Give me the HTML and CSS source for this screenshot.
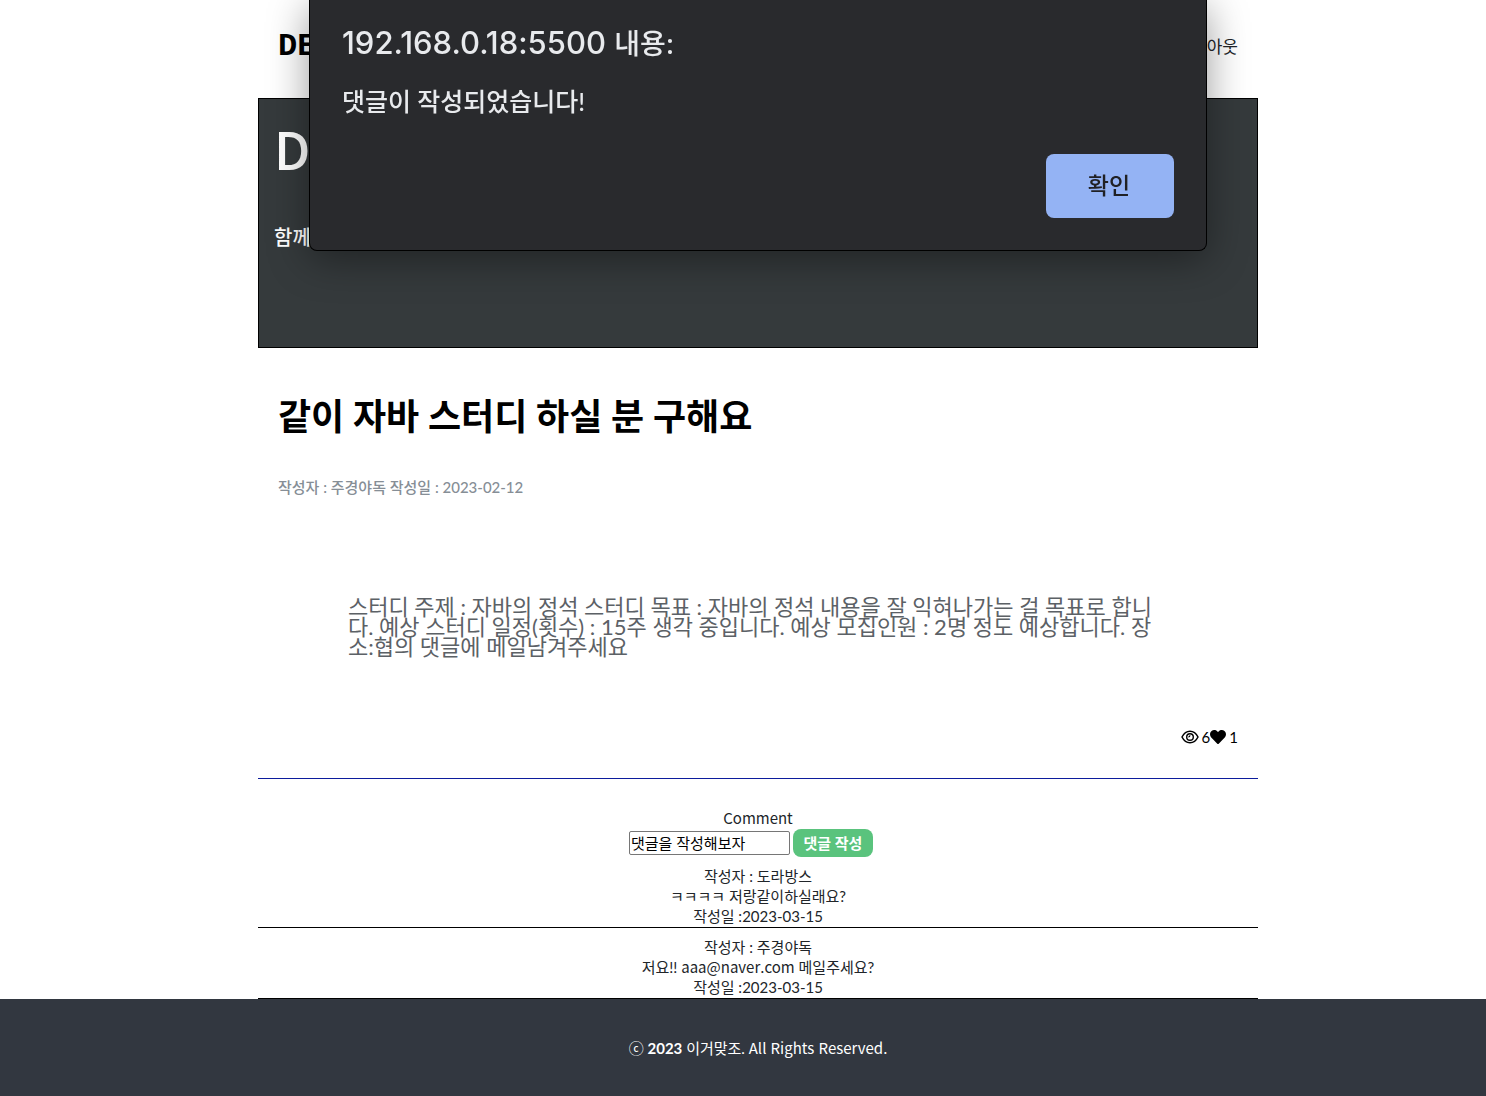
FILE: index.html
```html
<!DOCTYPE html>
<html lang="ko">
<head>
<meta charset="utf-8">
<meta name="viewport" content="width=device-width, initial-scale=1">
<title>스터디 모집</title>
<link rel="stylesheet" href="styles.css">
</head>
<body>
<div class="page">
  <header class="header container">
    <a class="logo" href="#">DE</a>
    <nav><a class="nav-link" href="#">로그아웃</a></nav>
  </header>

  <section class="banner container">
    <p class="banner-title">D</p>
    <p class="banner-text">함께</p>
  </section>

  <main class="container">
    <article class="post">
      <h1 class="post-title">같이 자바 스터디 하실 분 구해요</h1>
      <p class="post-meta">작성자 : 주경야독 작성일 : <time>2023-02-12</time></p>
      <p class="post-body">스터디 주제 : 자바의 정석 스터디 목표 : 자바의 정석 내용을 잘 익혀나가는 걸 목표로 합니다. 예상 스터디 일정(횟수) : 15주 생각 중입니다. 예상 모집인원 : 2명 정도 예상합니다. 장소:협의 댓글에 메일남겨주세요</p>
      <div class="post-stats">
        <svg class="eye" viewBox="0 0 18 14" aria-hidden="true">
          <path d="M1 7C3 3 6 1.200 9 1.200S15 3 17 7C15 11 12 12.800 9 12.800S3 11 1 7Z" fill="none" stroke="currentColor" stroke-width="1.500"/>
          <circle cx="9" cy="7" r="3.300" fill="none" stroke="currentColor" stroke-width="1.400"/>
          <path d="M9 5.300A1.700 1.700 0 0 1 7.300 7" fill="none" stroke="currentColor" stroke-width="1.100"/>
        </svg>
        <span>6</span>
        <svg class="heart" viewBox="0 0 512 512" aria-hidden="true">
          <path fill="currentColor" d="M462 62c-55-47-136-38-186 14l-20 20-20-20C186 24 105 15 50 62c-63 54-66 150-10 208l193 200c13 13 33 13 46 0l193-200c56-58 53-154-10-208z"/>
        </svg>
        <span>1</span>
      </div>
    </article>

    <section class="comments">
      <form class="comment-form">
        <label class="comment-label latin" for="comment">Comment</label>
        <div class="comment-row">
          <input class="comment-input" id="comment" type="text" value="댓글을 작성해보자">
          <button class="comment-button" type="button">댓글 작성</button>
        </div>
      </form>
      <div class="comment">
        <p>작성자 : 도라방스</p>
        <p>ㅋㅋㅋㅋ 저랑같이하실래요?</p>
        <p>작성일 :<time>2023-03-15</time></p>
      </div>
      <div class="comment">
        <p>작성자 : 주경야독</p>
        <p>저요!! <span class="latin">aaa@naver.com</span> 메일주세요?</p>
        <p>작성일 :<time>2023-03-15</time></p>
      </div>
    </section>
  </main>
</div>

<footer class="footer">ⓒ <span class="year">2023</span> 이거맞조. <span class="latin">All Rights Reserved.</span></footer>

<div class="alert" role="alertdialog" aria-labelledby="alert-title" aria-describedby="alert-text">
  <h2 class="alert-title" id="alert-title">192.168.0.18:5500 <span class="alert-says">내용:</span></h2>
  <p class="alert-text" id="alert-text">댓글이 작성되었습니다!</p>
  <button class="alert-button" type="button">확인</button>
</div>
</body>
</html>
```
FILE: styles.css
```css
* {
  box-sizing: border-box;
}

body {
  display: flex;
  flex-direction: column;
  min-height: 100vh;
  margin: 0;
  background: #fff;
  color: #212529;
  font-family: Lato, "Noto Sans CJK KR", sans-serif;
  font-size: 15px;
  line-height: 20px;
}

h1, h2, p {
  margin: 0;
}

a {
  color: inherit;
  text-decoration: none;
}

input, button {
  font-family: inherit;
  font-size: 15px;
}

.latin {
  font-family: "Noto Sans CJK KR", sans-serif;
}

span.latin {
  line-height: 1;
}

.page {
  padding-left: 30px;
}

.container {
  max-width: 1000px;
  margin: 0 auto;
}

.header {
  display: flex;
  align-items: center;
  justify-content: space-between;
  height: 98px;
  padding: 0 20px 4px;
}

.logo {
  color: #000;
  font-family: "Liberation Mono", monospace;
  font-size: 32px;
  font-weight: 700;
}

.nav-link {
  font-size: 17px;
}

.banner {
  min-height: 250px;
  padding: 20px 15px;
  border: 1px solid #000;
  background: #353a3c;
  color: #fff;
}

.banner-title {
  font-family: "Noto Sans CJK KR", sans-serif;
  font-size: 52px;
  font-weight: 500;
  line-height: 58px;
}

.banner-text {
  margin-top: 50px;
  font-size: 20px;
  font-weight: 500;
}

.post {
  padding: 44px 20px 31px;
  border-bottom: 1px solid #0c1c9c;
}

.post-title {
  color: #000;
  font-size: 36px;
  line-height: 48px;
}

.post-meta {
  margin-top: 37px;
  color: #868e96;
  font-weight: 500;
}

.post-body {
  max-width: 878px;
  margin-top: 100px;
  padding-left: 70px;
  color: #5c6166;
  font-size: 22px;
}

.post-stats {
  display: flex;
  align-items: center;
  justify-content: flex-end;
  margin-top: 70px;
  color: #000;
}

.eye {
  width: 18px;
  height: 14px;
  margin-right: 3px;
}

.heart {
  width: 16px;
  height: 16px;
  margin-right: 3px;
}

.comments {
  padding-top: 29px;
  text-align: center;
}

.comment-label {
  display: block;
}

.comment-row {
  display: flex;
  align-items: center;
  justify-content: center;
  gap: 3px;
  margin-top: 1px;
  padding-right: 14px;
}

.comment-input {
  width: 161px;
  height: 24px;
  padding: 0 1px 1px;
  border: 1px solid #767676;
  border-radius: 2px;
  color: #000;
}

.comment-button {
  width: 80px;
  height: 28px;
  padding: 0 0 1px;
  border: 0;
  border-radius: 8px;
  background: #5ac37d;
  color: #fff;
  font-weight: 700;
}

.comment {
  padding: 9px 0 1px;
  border-bottom: 1px solid #000;
}

.footer {
  flex: 1;
  padding: 39px 0 36px 30px;
  background: #323740;
  color: #fff;
  text-align: center;
}

.year {
  font-weight: 700;
}

.alert {
  position: fixed;
  top: 0;
  right: 0;
  left: 30px;
  display: flex;
  flex-direction: column;
  width: 898px;
  max-width: 90%;
  margin: 0 auto;
  padding: 23px 32px 32px;
  border: 1px solid #000;
  border-top: 0;
  border-radius: 0 0 8px 8px;
  background: #292a2d;
  box-shadow: 0 8px 40px rgba(0, 0, 0, 0.4);
  color: #e8eaed;
}

.alert-title {
  font-family: Inter, "Noto Sans CJK KR", sans-serif;
  font-size: 31px;
  font-weight: 500;
  line-height: 40px;
}

.alert-says {
  font-size: 28px;
}

.alert-text {
  margin-top: 19px;
  font-size: 25px;
  font-weight: 500;
  line-height: 36px;
}

.alert-button {
  align-self: flex-end;
  width: 128px;
  height: 64px;
  margin-top: 35px;
  padding: 0 2px 4px 0;
  border: 0;
  border-radius: 8px;
  background: #94b3f4;
  color: #202124;
  font-size: 23px;
  font-weight: 500;
}
```
